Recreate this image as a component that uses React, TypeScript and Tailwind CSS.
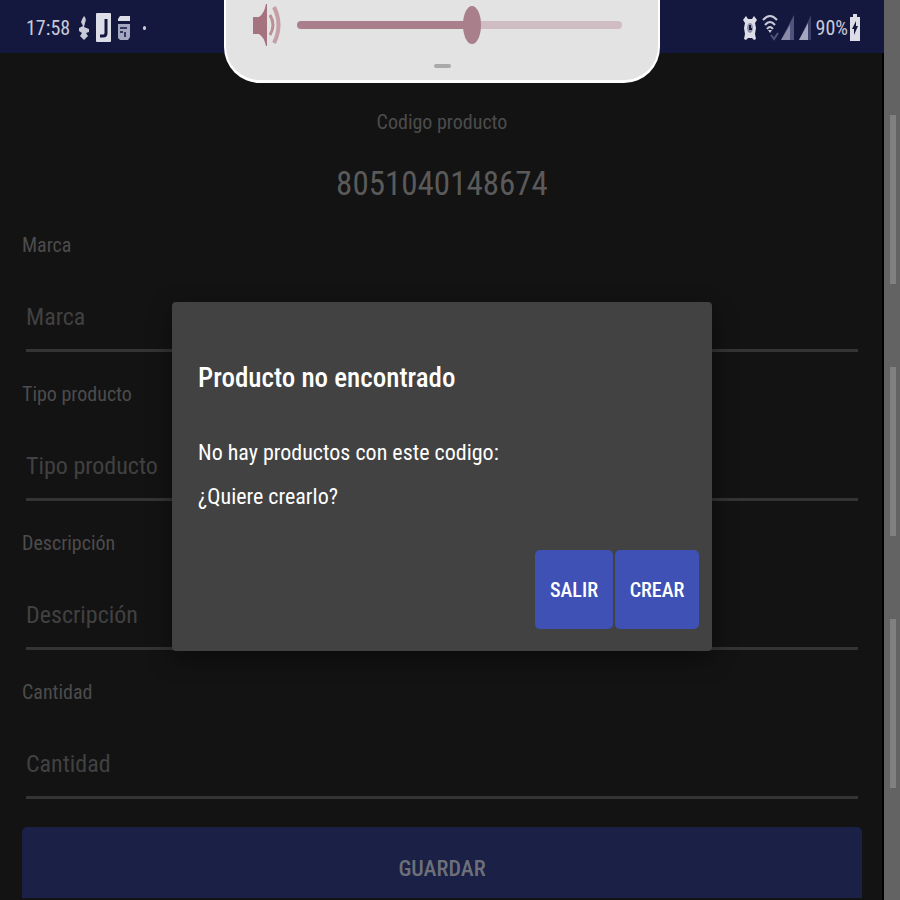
import React, { useState } from "react";

const fields = [
  { id: "marca", label: "Marca" },
  { id: "tipo", label: "Tipo producto" },
  { id: "descripcion", label: "Descripción" },
  { id: "cantidad", label: "Cantidad" },
];

const StatusBar = () => {
  return (
    <header className="flex h-[53px] shrink-0 items-center justify-between bg-[#14183f] pl-[26px] pr-6 pt-[2px] text-[20px] leading-6 text-[#c9cad8]">
      <div className="flex items-center">
        <span>17:58</span>
        {/* App notifications */}
        <svg className="ml-2 h-[26px] w-3" viewBox="0 0 12 26" fill="#c9cad8">
          <path d="M6 1q3 3 1 7l-1 4 5 2v3l-3 1 2 3-4 4-4-4 2-3-3-2v-3l4-2-2-4q1-3 3-6z" />
        </svg>
        <svg className="ml-[6px] h-[29px] w-[15px]" viewBox="0 0 15 29">
          <rect width="15" height="29" rx="1" fill="#dcdde6" />
          <path d="M10 6v14q0 3-3 3H4" fill="none" stroke="#14183f" strokeWidth="3" />
        </svg>
        <svg className="ml-[6px] h-6 w-[14px]" viewBox="0 0 14 24">
          <path d="M1 3 3 0h10v5H1z" fill="#dcdde6" />
          <path d="M1 8h12v13l-2 3H3l-2-2z" fill="#a5a7c0" />
          <path d="M3 12h7M3 16h3M8 16v5" fill="none" stroke="#343862" strokeWidth="2" />
        </svg>
        <span className="ml-3 h-1 w-[3px] rounded-full bg-[#c9cad8]" />
      </div>
      <div className="flex items-center">
        {/* Alarm */}
        <svg className="h-[26px] w-[14px]" viewBox="0 0 14 26" fill="#dcdde6">
          <path d="M0 5 3 1l2 3h4l2-3 3 4-2 3 1 5-1 6 1 5-2 1-2-2H5l-2 2-2-1 1-5-1-6 1-5z" />
          <ellipse cx="7" cy="13" rx="3" ry="5" fill="#8f91ac" />
          <path d="M7 10v4h2" fill="none" stroke="#14183f" strokeWidth="2" />
        </svg>
        {/* Wifi */}
        <svg className="ml-[5px] h-[27px] w-[17px]" viewBox="0 0 17 27" fill="none" stroke="#c9cad8" strokeWidth="2">
          <path d="M1 6q7-8 14 0M3 11q5-6 10 0M5 15q3-4 6 0" />
          <path d="M6 16h4l-2 3z" fill="#c9cad8" stroke="none" />
          <path d="M9 21l3 4 4-6" stroke="#50537b" />
        </svg>
        {/* Signal, both sims */}
        <svg className="ml-[2px] h-[25px] w-[14px]" viewBox="0 0 14 25">
          <path d="M0 25 13 0v25z" fill="#50537b" />
          <path d="M0 25 9 10v15z" fill="#8a8ca8" />
        </svg>
        <svg className="ml-1 h-[25px] w-[13px]" viewBox="0 0 13 25">
          <path d="M0 25 12 0v25z" fill="#3c4069" />
          <path d="M0 25 9 8v17z" fill="#a5a7c0" />
        </svg>
        <span className="ml-1">90%</span>
        {/* Battery */}
        <svg className="ml-[2px] h-[27px] w-[10px]" viewBox="0 0 10 27">
          <path d="M3 0h4v3h3v24H0V3h3z" fill="#dcdde6" />
          <path d="M6 7 2 15h2v6l4-9H6z" fill="#14183f" />
        </svg>
      </div>
    </header>
  );
};

const VolumePanel = () => {
  const [volume, setVolume] = useState(54);

  return (
    <div className="absolute left-1/2 top-0 flex h-[83px] w-[436px] -translate-x-1/2 flex-col items-center rounded-b-[36px] border-x-2 border-b-[3px] border-white bg-[#e3e3e4]">
      <div className="flex w-full items-center pl-[27px] pr-9 pt-1">
        <svg className="h-[42px] w-7 shrink-0" viewBox="0 0 28 42">
          <path d="M0 13h6Q11 10 13 0h1v42h-1Q11 33 6 30H0z" fill="#a5727f" />
          <path d="M17 11q6 10 0 20" fill="none" stroke="#b98f99" strokeWidth="3" />
          <path d="M21 3q9 18 0 36" fill="none" stroke="#c49fa8" strokeWidth="4" />
        </svg>
        <input
          type="range"
          aria-label="Volumen"
          value={volume}
          onChange={(e) => setVolume(Number(e.target.value))}
          style={{
            backgroundImage: `linear-gradient(to right, #a87f8a ${volume}%, #d0bdc3 ${volume}%)`,
          }}
          className="ml-4 h-2 min-w-0 flex-1 appearance-none rounded-sm [&::-webkit-slider-thumb]:h-[38px] [&::-webkit-slider-thumb]:w-[18px] [&::-webkit-slider-thumb]:appearance-none [&::-webkit-slider-thumb]:rounded-[50%] [&::-webkit-slider-thumb]:bg-[#a87f8a]"
        />
      </div>
      <span className="mt-[18px] h-1 w-[17px] rounded-sm bg-[#a9a9a9]" />
    </div>
  );
};

const NotFoundDialog = () => {
  return (
    <div className="absolute inset-x-0 bottom-0 top-[53px] flex items-center justify-center">
      <div
        role="dialog"
        aria-labelledby="dialog-title"
        className="w-full max-w-[540px] rounded-sm bg-[#424242] pb-[22px] pl-[26px] pr-[13px] pt-[53px] text-white shadow-[0_8px_24px_#00000066]"
      >
        <h2 id="dialog-title" className="text-[27px] font-medium leading-[46px]">
          Producto no encontrado
        </h2>
        <p className="mt-[30px] text-[22px] leading-[44px]">
          No hay productos con este codigo:
          <br />
          ¿Quiere crearlo?
        </p>
        <div className="mt-[31px] flex justify-end gap-[2px] text-[20px] font-medium">
          <button className="h-[79px] w-[78px] rounded-[5px] bg-[#3f51b5]">SALIR</button>
          <button className="h-[79px] w-[84px] rounded-[5px] bg-[#3f51b5]">CREAR</button>
        </div>
      </div>
    </div>
  );
};

const App = () => {
  return (
    <div className="flex min-h-screen bg-[#636363] font-['Roboto_Condensed','Liberation_Sans_Narrow',Roboto,sans-serif]">
      <div className="relative flex flex-1 flex-col bg-[#131313] shadow-[inset_-2px_0_#000000]">
        <StatusBar />
        <main className="flex flex-1 flex-col px-[22px] pb-[2px] pt-[53px] text-[#4c4c4c]">
          <p className="text-center text-[20px] leading-8">Codigo producto</p>
          <p className="mt-4 text-center text-[33px] leading-[60px] text-[#5a5a5a]">
            8051040148674
          </p>
          <div className="mt-[15px] flex flex-col gap-[26px]">
            {fields.map((field) => (
              <div key={field.id} className="flex flex-col">
                <label htmlFor={field.id} className="text-[20px] leading-8">
                  {field.label}
                </label>
                <input
                  id={field.id}
                  type="text"
                  placeholder={field.label}
                  className="mx-1 h-[91px] border-b-[3px] border-[#343434] bg-transparent pt-6 text-[24px] outline-none placeholder:text-[#414141]"
                />
              </div>
            ))}
          </div>
          <button className="mt-7 min-h-[71px] flex-1 rounded-t-[5px] bg-[#1a2046] pt-3 text-[22px] font-medium text-[#6d7078]">
            GUARDAR
          </button>
        </main>
        <VolumePanel />
        <NotFoundDialog />
      </div>

      {/* Edge of the screen behind the phone */}
      <div className="flex w-4 flex-col items-end gap-[83px] pr-1 pt-[115px]">
        <span className="h-[169px] w-[6px] bg-[#808080]" />
        <span className="h-[169px] w-[6px] bg-[#808080]" />
        <span className="h-[169px] w-[6px] bg-[#808080]" />
      </div>
    </div>
  );
};

export default App;
